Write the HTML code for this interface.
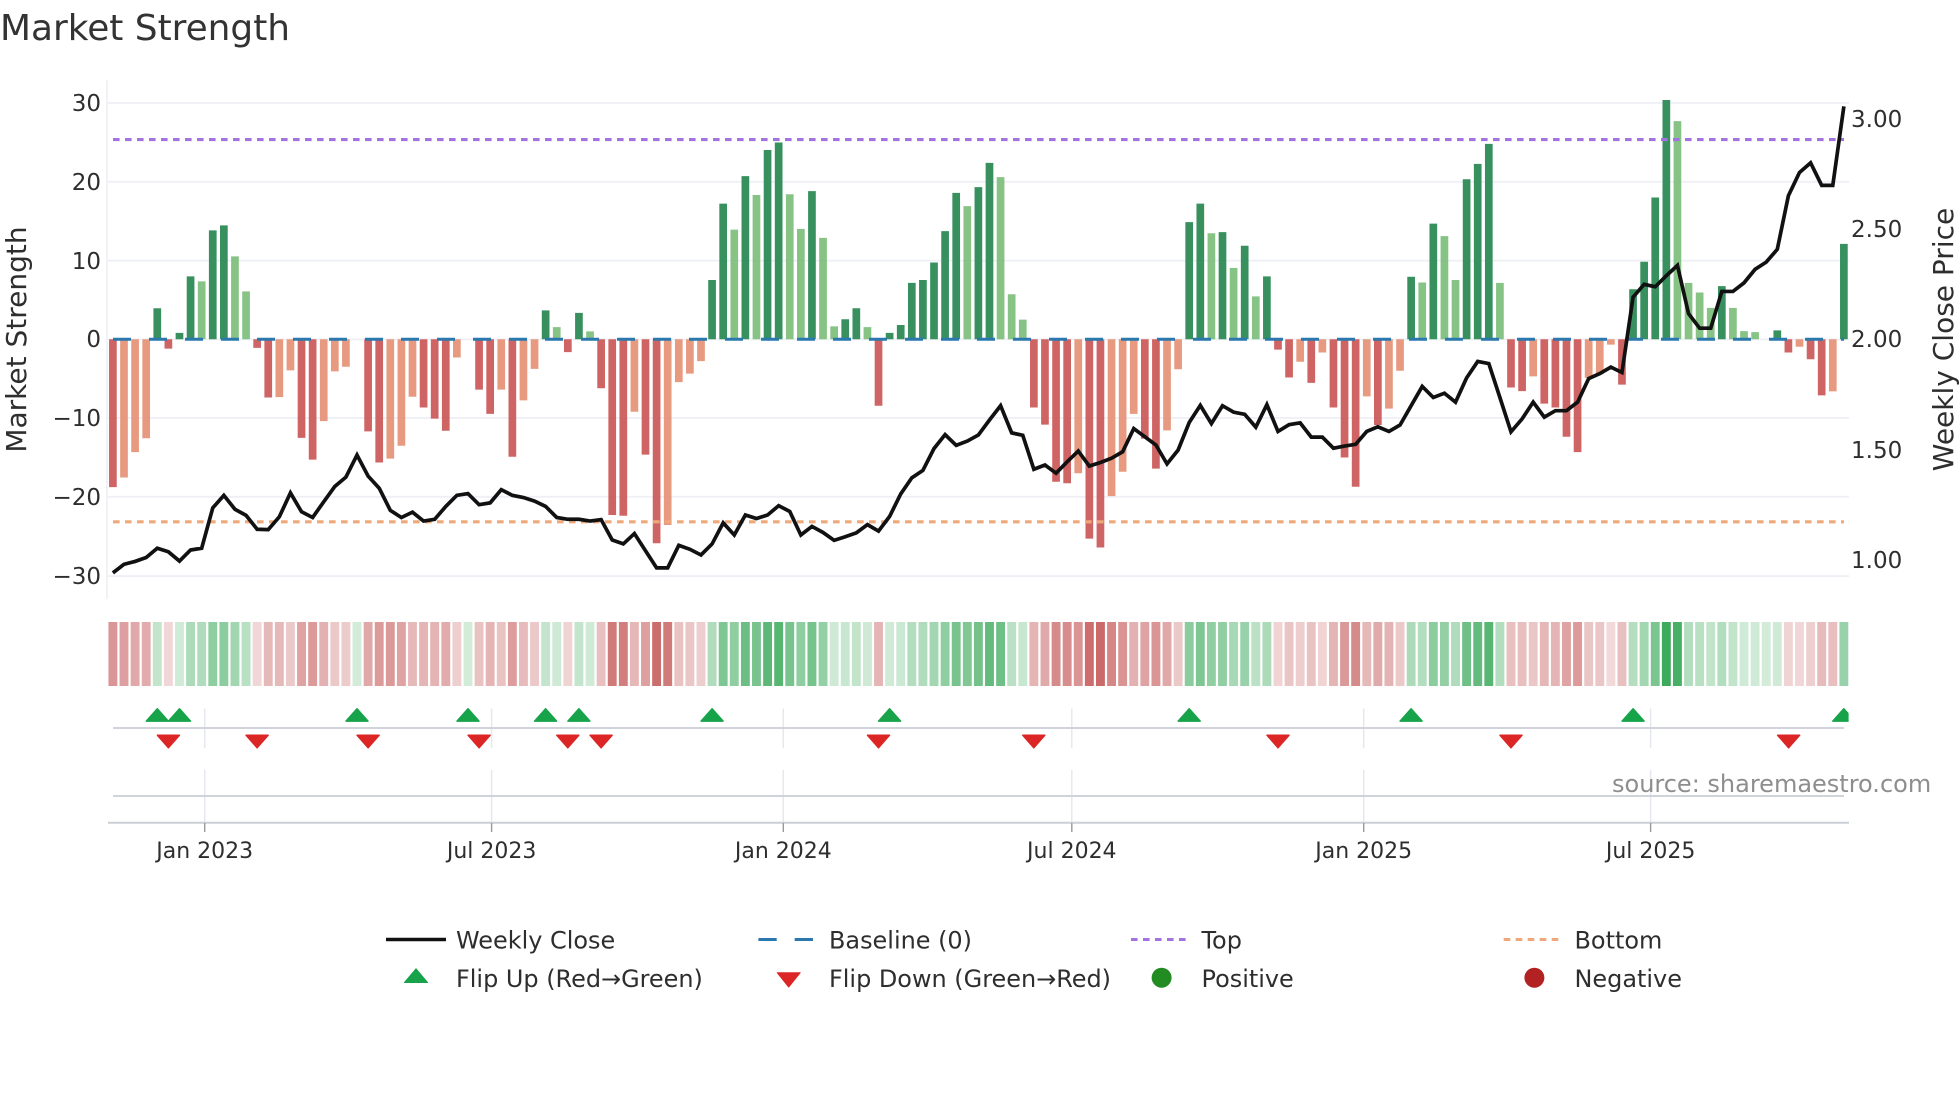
<!DOCTYPE html>
<html lang="en">
<head>
<meta charset="utf-8">
<title>Market Strength</title>
<style>
html,body{margin:0;padding:0;background:#fff}
svg{display:block}
text{font-family:"DejaVu Sans",sans-serif;fill:#2e2e2e}
.ns path,.ns polyline{vector-effect:non-scaling-stroke;fill:none}
.t{font-size:23px}
.l{font-size:23.95px}
</style>
</head>
<body>
<svg width="1960" height="1102" viewBox="0 0 1960 1102" xmlns="http://www.w3.org/2000/svg">
<defs>
<clipPath id="c"><rect x="108" y="600" width="1740.6" height="240"/></clipPath>
<path id="u" d="M-11 721.1L0 708.8 11 721.1Z" fill="#16a34a" stroke="#16a34a" stroke-width="1.5" stroke-linejoin="round"/>
<path id="d" d="M-11 735.2L0 747.8 11 735.2Z" fill="#dc2626" stroke="#dc2626" stroke-width="1.5" stroke-linejoin="round"/>
</defs>
<rect width="1960" height="1102" fill="#fff"/>

<text x="0" y="40" style="font-size:35.9px;fill:#333">Market Strength</text>

<g stroke="#eef0f6" stroke-width="1.9">
<path d="M108 102.9H1849M108 181.8H1849M108 260.7H1849M108 339.3H1849M108 417.9H1849M108 496.8H1849M108 576.1H1849"/>
</g>
<path d="M107 80.4V599.3" stroke="#eceef3" stroke-width="1.5"/>

<g class="t" text-anchor="end">
<text x="101" y="111">30</text>
<text x="101" y="190">20</text>
<text x="101" y="269">10</text>
<text x="101" y="347">0</text>
<text x="101" y="426">−10</text>
<text x="101" y="505">−20</text>
<text x="101" y="584">−30</text>
</g>
<g class="t">
<text x="1851" y="127">3.00</text>
<text x="1851" y="237">2.50</text>
<text x="1851" y="347">2.00</text>
<text x="1851" y="458">1.50</text>
<text x="1851" y="568">1.00</text>
</g>
<text transform="translate(26,339.5) rotate(-90)" text-anchor="middle" style="font-size:28px">Market Strength</text>
<text transform="translate(1953,339.5) rotate(-90)" text-anchor="middle" style="font-size:28px">Weekly Close Price</text>

<g class="ns" transform="translate(112.9,60) scale(11.096,.35714)" stroke-width="7.7" opacity=".95">
<path stroke="#cd5c5c" d="M0 782V1196M5 782V808M13 782V806M14 782V945M17 782V1058M18 782V1119M23 782V1040M24 782V1127M28 782V973M29 782V1004M30 782V1038M33 782V923M34 782V991M36 782V1111M41 782V818M44 782V919M45 782V1274M46 782V1276M48 782V1105M49 782V1353M69 782V968M83 782V973M84 782V1021M85 782V1181M86 782V1185M88 782V1340M89 782V1365M93 782V1060M94 782V1144M105 782V811M106 782V889M108 782V904M110 782V973M111 782V1113M112 782V1195M114 782V1022M126 782V917M127 782V927M129 782V962M130 782V973M131 782V1055M132 782V1098M136 782V909M151 782V819M153 782V838M154 782V939"/>
<path stroke="#e6957a" d="M1 782V1169M2 782V1098M3 782V1059M15 782V944M16 782V869M19 782V1011M20 782V872M21 782V859M25 782V1116M26 782V1080M27 782V943M31 782V833M35 782V923M37 782V953M38 782V865M47 782V985M50 782V1302M51 782V902M52 782V878M53 782V843M87 782V1157M90 782V1221M91 782V1153M92 782V991M95 782V1037M96 782V866M107 782V845M109 782V819M113 782V942M115 782V976M116 782V870M128 782V886M133 782V890M134 782V880M135 782V797M152 782V803M155 782V928"/>
<path stroke="#2e8b57" d="M4 782V695M6 782V764M7 782V606M9 782V477M10 782V463M39 782V701M42 782V708M54 782V616M55 782V402M57 782V325M59 782V252M60 782V231M63 782V367M66 782V726M67 782V695M70 782V764M71 782V742M72 782V624M73 782V616M74 782V567M75 782V479M76 782V372M78 782V356M79 782V288M97 782V454M98 782V402M100 782V482M102 782V520M104 782V606M117 782V607M119 782V458M122 782V334M123 782V291M124 782V235M137 782V642M138 782V565M139 782V385M140 782V112M145 782V633M150 782V757M156 782V515"/>
<path stroke="#81c07f" d="M8 782V620M11 782V550M12 782V648M40 782V748M43 782V760M56 782V475M58 782V378M61 782V376M62 782V473M64 782V498M65 782V746M68 782V748M77 782V409M80 782V328M81 782V656M82 782V727M99 782V485M101 782V582M103 782V662M118 782V623M120 782V493M121 782V616M125 782V624M141 782V171M142 782V624M143 782V651M144 782V694M146 782V694M147 782V759M148 782V762"/>
</g>

<path d="M113 339.3H1844" stroke="#2a78ad" stroke-width="3" stroke-dasharray="18 18" fill="none"/>
<path d="M113 139.6H1844" stroke="#a374e0" stroke-width="3.1" stroke-dasharray="6.6 5.4" fill="none"/>
<path d="M113 521.8H1844" stroke="#f0a878" stroke-width="3.1" stroke-dasharray="6.6 5.4" fill="none"/>

<g class="ns" transform="translate(112.9,60) scale(11.096,.35714)">
<polyline stroke="#111" stroke-width="3.7" stroke-linejoin="miter" points="0,1436 1,1412 2,1404 3,1393 4,1367 5,1377 6,1403 7,1372 8,1367 9,1254 10,1219 11,1258 12,1275 13,1314 14,1315 15,1279 16,1212 17,1265 18,1281 19,1237 20,1194 21,1168 22,1106 23,1165 24,1199 25,1261 26,1281 27,1266 28,1291 29,1286 30,1250 31,1219 32,1214 33,1245 34,1240 35,1203 36,1219 37,1225 38,1235 39,1250 40,1281 41,1286 42,1286 43,1291 44,1287 45,1344 46,1355 47,1326 48,1374 49,1422 50,1422 51,1359 52,1370 53,1386 54,1355 55,1296 56,1330 57,1274 58,1284 59,1274 60,1248 61,1264 62,1330 63,1306 64,1323 65,1345 66,1335 67,1324 68,1301 69,1319 70,1278 71,1215 72,1170 73,1149 74,1088 75,1049 76,1079 77,1067 78,1050 79,1008 80,968 81,1044 82,1051 83,1146 84,1134 85,1157 86,1125 87,1095 88,1137 89,1127 90,1115 91,1097 92,1032 93,1055 94,1078 95,1131 96,1092 97,1015 98,967 99,1018 100,968 101,986 102,992 103,1028 104,965 105,1040 106,1021 107,1016 108,1056 109,1056 110,1087 111,1081 112,1076 113,1040 114,1027 115,1040 116,1022 117,968 118,914 119,945 120,933 121,958 122,890 123,844 124,850 125,945 126,1041 127,1005 128,958 129,1000 130,982 131,982 132,958 133,892 134,878 135,860 136,875 137,664 138,628 139,635 140,604 141,575 142,710 143,751 144,751 145,648 146,648 147,624 148,586 149,566 150,530 151,380 152,315 153,288 154,351 155,351 156,130"/>
</g>

<!-- heat strip -->
<g class="ns" transform="translate(112.9,0) scale(11.096,1)" stroke-width="8.9">
<g stroke="#b22222">
<path opacity=".47" d="M0 622V686"/><path opacity=".43" d="M1 622V686"/><path opacity=".39" d="M2 622V686"/><path opacity=".37" d="M3 622V686"/>
<path opacity=".18" d="M5 622V686"/><path opacity=".18" d="M13 622V686"/><path opacity=".31" d="M14 622V686"/><path opacity=".31" d="M15 622V686"/>
<path opacity=".24" d="M16 622V686"/><path opacity=".41" d="M17 622V686"/><path opacity=".45" d="M18 622V686"/><path opacity=".35" d="M19 622V686"/>
<path opacity=".24" d="M20 622V686"/><path opacity=".23" d="M21 622V686"/><path opacity=".39" d="M23 622V686"/><path opacity=".45" d="M24 622V686"/>
<path opacity=".46" d="M25 622V686"/><path opacity=".41" d="M26 622V686"/><path opacity=".31" d="M27 622V686"/><path opacity=".33" d="M28 622V686"/>
<path opacity=".34" d="M29 622V686"/><path opacity=".37" d="M30 622V686"/><path opacity=".21" d="M31 622V686"/><path opacity=".27" d="M33 622V686"/>
<path opacity=".33" d="M34 622V686"/><path opacity=".27" d="M35 622V686"/><path opacity=".44" d="M36 622V686"/><path opacity=".3" d="M37 622V686"/>
<path opacity=".24" d="M38 622V686"/><path opacity=".19" d="M41 622V686"/><path opacity=".28" d="M44 622V686"/><path opacity=".6" d="M45 622V686"/>
<path opacity=".58" d="M46 622V686"/><path opacity=".32" d="M47 622V686"/><path opacity=".43" d="M48 622V686"/><path opacity=".66" d="M49 622V686"/>
<path opacity=".6" d="M50 622V686"/><path opacity=".27" d="M51 622V686"/><path opacity=".25" d="M52 622V686"/><path opacity=".22" d="M53 622V686"/>
<path opacity=".33" d="M69 622V686"/><path opacity=".33" d="M83 622V686"/><path opacity=".38" d="M84 622V686"/><path opacity=".52" d="M85 622V686"/>
<path opacity=".51" d="M86 622V686"/><path opacity=".48" d="M87 622V686"/><path opacity=".65" d="M88 622V686"/><path opacity=".67" d="M89 622V686"/>
<path opacity=".54" d="M90 622V686"/><path opacity=".48" d="M91 622V686"/><path opacity=".35" d="M92 622V686"/><path opacity=".41" d="M93 622V686"/>
<path opacity=".47" d="M94 622V686"/><path opacity=".39" d="M95 622V686"/><path opacity=".24" d="M96 622V686"/><path opacity=".19" d="M105 622V686"/>
<path opacity=".26" d="M106 622V686"/><path opacity=".22" d="M107 622V686"/><path opacity=".27" d="M108 622V686"/><path opacity=".19" d="M109 622V686"/>
<path opacity=".33" d="M110 622V686"/><path opacity=".46" d="M111 622V686"/><path opacity=".52" d="M112 622V686"/><path opacity=".31" d="M113 622V686"/>
<path opacity=".38" d="M114 622V686"/><path opacity=".34" d="M115 622V686"/><path opacity=".24" d="M116 622V686"/><path opacity=".28" d="M126 622V686"/>
<path opacity=".29" d="M127 622V686"/><path opacity=".25" d="M128 622V686"/><path opacity=".32" d="M129 622V686"/><path opacity=".33" d="M130 622V686"/>
<path opacity=".41" d="M131 622V686"/><path opacity=".45" d="M132 622V686"/><path opacity=".26" d="M133 622V686"/><path opacity=".25" d="M134 622V686"/>
<path opacity=".17" d="M135 622V686"/><path opacity=".28" d="M136 622V686"/><path opacity=".19" d="M151 622V686"/><path opacity=".18" d="M152 622V686"/>
<path opacity=".21" d="M153 622V686"/><path opacity=".3" d="M154 622V686"/><path opacity=".29" d="M155 622V686"/>
</g>
<g stroke="#03912c">
<path opacity=".24" d="M4 622V686"/><path opacity=".18" d="M6 622V686"/><path opacity=".32" d="M7 622V686"/><path opacity=".31" d="M8 622V686"/>
<path opacity=".44" d="M9 622V686"/><path opacity=".45" d="M10 622V686"/><path opacity=".37" d="M11 622V686"/><path opacity=".28" d="M12 622V686"/>
<path opacity=".17" d="M22 622V686"/><path opacity=".17" d="M32 622V686"/><path opacity=".23" d="M39 622V686"/><path opacity=".19" d="M40 622V686"/>
<path opacity=".23" d="M42 622V686"/><path opacity=".18" d="M43 622V686"/><path opacity=".31" d="M54 622V686"/><path opacity=".51" d="M55 622V686"/>
<path opacity=".44" d="M56 622V686"/><path opacity=".58" d="M57 622V686"/><path opacity=".53" d="M58 622V686"/><path opacity=".64" d="M59 622V686"/>
<path opacity=".66" d="M60 622V686"/><path opacity=".53" d="M61 622V686"/><path opacity=".44" d="M62 622V686"/><path opacity=".54" d="M63 622V686"/>
<path opacity=".42" d="M64 622V686"/><path opacity=".19" d="M65 622V686"/><path opacity=".21" d="M66 622V686"/><path opacity=".24" d="M67 622V686"/>
<path opacity=".19" d="M68 622V686"/><path opacity=".18" d="M70 622V686"/><path opacity=".2" d="M71 622V686"/><path opacity=".3" d="M72 622V686"/>
<path opacity=".31" d="M73 622V686"/><path opacity=".36" d="M74 622V686"/><path opacity=".44" d="M75 622V686"/><path opacity=".53" d="M76 622V686"/>
<path opacity=".5" d="M77 622V686"/><path opacity=".55" d="M78 622V686"/><path opacity=".61" d="M79 622V686"/><path opacity=".57" d="M80 622V686"/>
<path opacity=".27" d="M81 622V686"/><path opacity=".21" d="M82 622V686"/><path opacity=".46" d="M97 622V686"/><path opacity=".51" d="M98 622V686"/>
<path opacity=".43" d="M99 622V686"/><path opacity=".43" d="M100 622V686"/><path opacity=".34" d="M101 622V686"/><path opacity=".4" d="M102 622V686"/>
<path opacity=".27" d="M103 622V686"/><path opacity=".32" d="M104 622V686"/><path opacity=".32" d="M117 622V686"/><path opacity=".3" d="M118 622V686"/>
<path opacity=".45" d="M119 622V686"/><path opacity=".42" d="M120 622V686"/><path opacity=".31" d="M121 622V686"/><path opacity=".57" d="M122 622V686"/>
<path opacity=".61" d="M123 622V686"/><path opacity=".66" d="M124 622V686"/><path opacity=".3" d="M125 622V686"/><path opacity=".29" d="M137 622V686"/>
<path opacity=".36" d="M138 622V686"/><path opacity=".52" d="M139 622V686"/><path opacity=".77" d="M140 622V686"/><path opacity=".72" d="M141 622V686"/>
<path opacity=".3" d="M142 622V686"/><path opacity=".28" d="M143 622V686"/><path opacity=".24" d="M144 622V686"/><path opacity=".3" d="M145 622V686"/>
<path opacity=".24" d="M146 622V686"/><path opacity=".18" d="M147 622V686"/><path opacity=".18" d="M148 622V686"/><path opacity=".17" d="M149 622V686"/>
<path opacity=".18" d="M150 622V686"/><path opacity=".4" d="M156 622V686"/>
</g>
</g>

<!-- date grid -->
<path d="M204.7 708.5V748M491.6 708.5V748M783.3 708.5V748M1071.8 708.5V748M1363.7 708.5V748M1650.6 708.5V748M204.7 770V822M491.6 770V822M783.3 770V822M1071.8 770V822M1363.7 770V822M1650.6 770V822" stroke="#e6e8f0" stroke-width="1.5" fill="none"/>
<path d="M113 728H1844M113 796H1844" stroke="#d0d4da" stroke-width="2" fill="none"/>
<path d="M108 822.8H1849" stroke="#cbd0d6" stroke-width="2" fill="none"/>
<path d="M204.7 823V832M491.6 823V832M783.3 823V832M1071.8 823V832M1363.7 823V832M1650.6 823V832" stroke="#9a9a9a" stroke-width="1.4" fill="none"/>

<!-- flips -->
<g clip-path="url(#c)">
<use href="#u" x="157.3"/><use href="#u" x="179.5"/><use href="#u" x="357"/><use href="#u" x="468"/><use href="#u" x="545.6"/><use href="#u" x="578.9"/><use href="#u" x="712.1"/><use href="#u" x="889.6"/><use href="#u" x="1189.2"/><use href="#u" x="1411.1"/><use href="#u" x="1633.1"/><use href="#u" x="1843.8"/>
<use href="#d" x="168.4"/><use href="#d" x="257.1"/><use href="#d" x="368.1"/><use href="#d" x="479.1"/><use href="#d" x="567.8"/><use href="#d" x="601.1"/><use href="#d" x="878.5"/><use href="#d" x="1033.8"/><use href="#d" x="1278"/><use href="#d" x="1511"/><use href="#d" x="1788.6"/>
</g>

<g class="t" text-anchor="middle" style="font-size:22px">
<text x="204.7" y="858">Jan 2023</text>
<text x="491.6" y="858">Jul 2023</text>
<text x="783.3" y="858">Jan 2024</text>
<text x="1071.8" y="858">Jul 2024</text>
<text x="1363.7" y="858">Jan 2025</text>
<text x="1650.6" y="858">Jul 2025</text>
</g>

<text x="1612" y="792" style="font-size:24px;fill:#8e8e8e">source: sharemaestro.com</text>

<!-- legend -->
<path d="M386 939.5H446" stroke="#111" stroke-width="3.4"/>
<path d="M758.4 939.5H813" stroke="#2a78ad" stroke-width="3" stroke-dasharray="18.3 18"/>
<path d="M1131 939.5H1186" stroke="#a374e0" stroke-width="3.1" stroke-dasharray="6.6 5.4"/>
<path d="M1503.7 939.5H1558.5" stroke="#f0a878" stroke-width="3.1" stroke-dasharray="6.6 5.4"/>
<path d="M404.5 982.5L416 968.8 427.5 982.5Z" fill="#16a34a" stroke="#16a34a" stroke-width="1" stroke-linejoin="round"/>
<path d="M777.2 972.7L788.7 987 800.2 972.7Z" fill="#dc2626" stroke="#dc2626" stroke-width="1" stroke-linejoin="round"/>
<circle cx="1161.6" cy="977.7" r="10" fill="#228b22"/>
<circle cx="1534.4" cy="977.7" r="10" fill="#b22222"/>
<g class="l">
<text x="456" y="948.5">Weekly Close</text>
<text x="829" y="948.5">Baseline (0)</text>
<text x="1201.5" y="948.5">Top</text>
<text x="1574.5" y="948.5">Bottom</text>
<text x="456" y="987">Flip Up (Red→Green)</text>
<text x="829" y="987">Flip Down (Green→Red)</text>
<text x="1201.5" y="987">Positive</text>
<text x="1574.5" y="987">Negative</text>
</g>
</svg>
</body>
</html>
